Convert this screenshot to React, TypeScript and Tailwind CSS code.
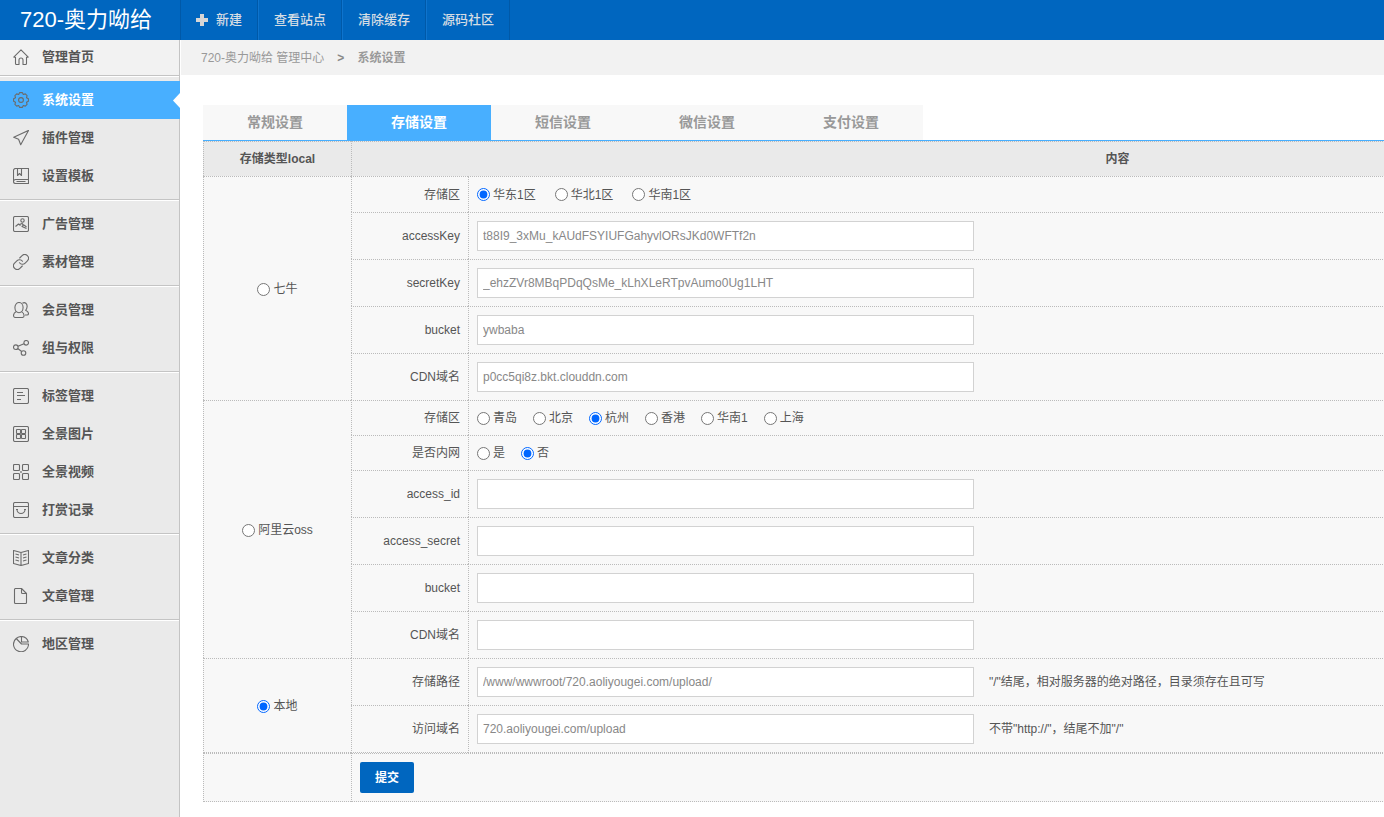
import { useState } from 'react';
import type { ReactNode } from 'react';

interface MenuEntry {
  label: string;
  icon: ReactNode;
}

interface Field {
  id: string;
  label: string;
  value?: string;
  options?: string[];
  selected?: string;
  hint?: string;
}

interface StorageGroup {
  id: string;
  label: string;
  wide?: boolean;
  fields: Field[];
}

const homeIcon = (
  <path d="M.5 8.3 8 .8l7.5 7.5M.5 8.3h2v6.200a1 1 0 0 0 1 1H6V11a2 2 0 0 1 4 0v4.500h2.500a1 1 0 0 0 1-1V8.300h2" />
);

const menuGroups: MenuEntry[][] = [
  [
    {
      label: '系统设置',
      icon: (
        <>
          <path d="M15.400 6.700v2.600l-1.900 1 .6 2-1.800 1.800-2-.6-1 1.900H6.700l-1-1.900-2 .6-1.800-1.800.6-2-1.900-1V6.700l1.900-1-.6-2 1.800-1.800 2 .6 1-1.900h2.600l1 1.900 2-.6 1.800 1.800-.6 2z" />
          <circle cx="8" cy="8" r="2.4" />
        </>
      ),
    },
    { label: '插件管理', icon: <path d="M15.5.4.7 7.300l4.900 1.900 2.100 5.600z" /> },
    {
      label: '设置模板',
      icon: (
        <>
          <path d="M15.5.5h-13a2 2 0 0 0-2 2v11a2 2 0 0 0 2 2h13zM.5 13.500a2 2 0 0 1 2-2h13M3.500 13.500h9" />
          <path d="M4.500.5v7l2-2 2 2v-7" />
        </>
      ),
    },
  ],
  [
    {
      label: '广告管理',
      icon: (
        <>
          <rect x=".5" y=".5" width="15" height="15" rx="1.5" />
          <circle cx="9.5" cy="4.5" r="1.7" />
          <path d="M2.500 10.500 5.500 8l2 1.500M6.500 8.500 9 7.500l1.500 1.500L9 10.500l4.500 2M11 9l2.500 2" />
        </>
      ),
    },
    {
      label: '素材管理',
      icon: (
        <g transform="translate(-1 -1) scale(.75)" strokeWidth="1.5" strokeLinecap="round">
          <path d="M10 13a5 5 0 0 0 7.540.54l3-3a5 5 0 0 0-7.070-7.070l-3.200 3.200" />
          <path d="M14 11a5 5 0 0 0-7.540-.54l-3 3a5 5 0 0 0 7.070 7.070l3.200-3.200" />
        </g>
      ),
    },
  ],
  [
    {
      label: '会员管理',
      icon: (
        <>
          <ellipse cx="6" cy="5.6" rx="4.1" ry="5.1" />
          <path d="M3.300 9.600C1.500 10.600.5 11.700.5 13.400c0 1.300.8 2.100 2 2.100h6.600c1.200 0 2-.8 2-2.100 0-1.700-1-2.800-2.600-3.800" />
          <path d="M9.400 1.300c2.600-1.800 5 .4 4.700 3.500-.1 1.600-.6 2.700-1.500 3.500 1.800.8 2.900 1.800 2.900 3.300 0 .9-.6 1.400-1.500 1.400h-2" />
        </>
      ),
    },
    {
      label: '组与权限',
      icon: (
        <>
          <circle cx="2.8" cy="7.2" r="2.3" />
          <circle cx="13.2" cy="2.8" r="2.3" />
          <circle cx="10.5" cy="13" r="2.3" />
          <path d="m5 6.300 6-2.500M4.700 8.500l4 3" />
        </>
      ),
    },
  ],
  [
    {
      label: '标签管理',
      icon: (
        <>
          <rect x=".5" y=".5" width="15" height="15" rx="1.5" />
          <path d="M4 4.500h6M4 7.500h8M4 11.500h4" />
        </>
      ),
    },
    {
      label: '全景图片',
      icon: (
        <>
          <rect x=".5" y=".5" width="15" height="15" rx="1.5" />
          <rect x="3.5" y="3.5" width="4" height="4" rx=".5" />
          <rect x="8.5" y="3.5" width="4" height="4" rx=".5" />
          <rect x="3.5" y="8.5" width="4" height="4" rx=".5" />
          <rect x="8.5" y="8.5" width="4" height="4" rx=".5" />
        </>
      ),
    },
    {
      label: '全景视频',
      icon: (
        <>
          <rect x=".5" y=".5" width="6" height="6" rx="1" />
          <rect x="9.5" y=".5" width="6" height="6" rx="1" />
          <rect x=".5" y="9.5" width="6" height="6" rx="1" />
          <rect x="9.5" y="9.5" width="6" height="6" rx="1" />
          <path d="m6.500 6.500 3 3M9.500 6.500l-3 3" strokeWidth=".6" />
        </>
      ),
    },
    {
      label: '打赏记录',
      icon: (
        <>
          <rect x=".5" y=".5" width="15" height="15" rx="1.5" />
          <path d="M.5 4.500h15M4 7.500a4 4 0 0 0 8 0M3 7.500h2M11 7.500h2" />
        </>
      ),
    },
  ],
  [
    {
      label: '文章分类',
      icon: (
        <>
          <path d="M8 2.500.5.500v13l7.500 2 7.500-2V.5zM8 2.500v13" />
          <path d="m2.500 4 3.500 1M2.500 7 6 8M2.500 10 6 11M13.500 4 10 5M13.500 7 10 8M13.500 10 10 11" />
        </>
      ),
    },
    {
      label: '文章管理',
      icon: <path d="M8.500.5h-6a1 1 0 0 0-1 1v13a1 1 0 0 0 1 1h10a1 1 0 0 0 1-1v-9zM8.500.5v4a1 1 0 0 0 1 1h4" />,
    },
  ],
  [
    {
      label: '地区管理',
      icon: (
        <>
          <path d="M3.200 2.500A7.500 7.500 0 1 0 15.500 8H8.500z" />
          <path d="M8.500.5V6h6.800A7.500 7.500 0 0 0 8.500.5zM3.200 2.500A7.500 7.500 0 0 1 8.500.5" />
        </>
      ),
    },
  ],
];

const navLinks = ['查看站点', '清除缓存', '源码社区'];
const tabs = ['常规设置', '存储设置', '短信设置', '微信设置', '支付设置'];

const storageGroups: StorageGroup[] = [
  {
    id: 'qiniu',
    label: '七牛',
    wide: true,
    fields: [
      { id: 'qiniu-zone', label: '存储区', options: ['华东1区', '华北1区', '华南1区'], selected: '华东1区' },
      { id: 'qiniu-access', label: 'accessKey', value: 't88I9_3xMu_kAUdFSYIUFGahyvlORsJKd0WFTf2n' },
      { id: 'qiniu-secret', label: 'secretKey', value: '_ehzZVr8MBqPDqQsMe_kLhXLeRTpvAumo0Ug1LHT' },
      { id: 'qiniu-bucket', label: 'bucket', value: 'ywbaba' },
      { id: 'qiniu-cdn', label: 'CDN域名', value: 'p0cc5qi8z.bkt.clouddn.com' },
    ],
  },
  {
    id: 'oss',
    label: '阿里云oss',
    fields: [
      { id: 'oss-zone', label: '存储区', options: ['青岛', '北京', '杭州', '香港', '华南1', '上海'], selected: '杭州' },
      { id: 'oss-internal', label: '是否内网', options: ['是', '否'], selected: '否' },
      { id: 'oss-access', label: 'access_id', value: '' },
      { id: 'oss-secret', label: 'access_secret', value: '' },
      { id: 'oss-bucket', label: 'bucket', value: '' },
      { id: 'oss-cdn', label: 'CDN域名', value: '' },
    ],
  },
  {
    id: 'local',
    label: '本地',
    fields: [
      { id: 'local-path', label: '存储路径', value: '/www/wwwroot/720.aoliyougei.com/upload/', hint: '"/"结尾，相对服务器的绝对路径，目录须存在且可写' },
      { id: 'local-domain', label: '访问域名', value: '720.aoliyougei.com/upload', hint: '不带"http://"，结尾不加"/"' },
    ],
  },
];

function MenuItem({ label, icon, active }: MenuEntry & { active?: boolean }) {
  return (
    <a
      href="#"
      className={`relative flex h-[38px] items-center gap-[13px] pl-[13px] text-[13px] font-bold ${
        active ? '-mr-px bg-[#48afff] text-white' : 'text-[#555]'
      }`}
    >
      <svg className="size-4 shrink-0" viewBox="0 0 16 16" fill="none" stroke="#6b6b6b" strokeWidth="1.1" strokeLinejoin="round">
        {icon}
      </svg>
      <span>{label}</span>
      {active && (
        <svg className="absolute top-3 right-0 h-[15px] w-[7px]" viewBox="0 0 7 15" fill="#fff">
          <path d="M7 0v15L0 7.500z" />
        </svg>
      )}
    </a>
  );
}

interface RadioProps {
  name: string;
  label: string;
  checked: boolean;
  onChange: () => void;
}

function Radio({ name, label, checked, onChange }: RadioProps) {
  return (
    <label className="inline-flex items-center gap-[3px]">
      <input type="radio" name={name} checked={checked} onChange={onChange} className="size-[13px] accent-[#0066ff]" />
      <span>{label}</span>
    </label>
  );
}

function FieldInput({ field, wide }: { field: Field; wide?: boolean }) {
  const [value, setValue] = useState(field.options ? field.selected : field.value);

  if (field.options) {
    return (
      <div role="radiogroup" aria-labelledby={`${field.id}-label`} className={`flex items-center ${wide ? 'gap-[19px]' : 'gap-4'}`}>
        {field.options.map((option) => (
          <Radio key={option} name={field.id} label={option} checked={value === option} onChange={() => setValue(option)} />
        ))}
      </div>
    );
  }

  return (
    <div className="flex items-center gap-[15px]">
      <input
        id={field.id}
        type="text"
        value={value}
        onChange={(e) => setValue(e.target.value)}
        className="h-[30px] w-[497px] border border-[#d2d2d2] bg-white px-[5px] text-xs text-[#888] focus:outline-none"
      />
      {field.hint && <span>{field.hint}</span>}
    </div>
  );
}

export default function App() {
  const [storage, setStorage] = useState('local');
  const [activeTab, setActiveTab] = useState('存储设置');

  return (
    <div className="flex min-h-screen flex-col bg-white font-['Liberation_Sans','Noto_Sans_CJK_SC',sans-serif] text-xs text-[#555]">
      <header className="flex h-10 bg-[#0066bf] text-[13px] font-medium text-[#d6dde4]">
        <div className="w-[180px] shrink-0 pl-5 text-[22px] leading-10 font-normal text-white">720-奥力呦给</div>
        <nav className="flex border-l border-[#0059a8]">
          <a href="#" className="flex items-center border-r border-[#0059a8] px-[15px]">
            <svg className="mr-2 size-3" viewBox="0 0 12 12" fill="#d6d6d6">
              <path d="M4 0h4v4h4v4H8v4H4V8H0V4h4z" />
            </svg>
            新建
          </a>
          {navLinks.map((link) => (
            <a key={link} href="#" className="flex items-center border-r border-l border-r-[#0059a8] border-l-[#0f74cd] px-[15px]">
              {link}
            </a>
          ))}
        </nav>
      </header>

      <div className="flex flex-1">
        <aside className="w-[180px] shrink-0 border-r border-[#c4c4c4] bg-[#eaeaea]">
          <div className="flex h-9 items-center border-b border-[#c4c4c4] bg-[#f2f2f2] pb-0.5">
            <MenuItem label="管理首页" icon={homeIcon} />
          </div>
          {menuGroups.map((group, index) => (
            <div
              key={index}
              className={`border-t border-white py-1 ${index < menuGroups.length - 1 ? 'border-b border-b-[#c4c4c4]' : ''}`}
            >
              {group.map((entry) => (
                <MenuItem key={entry.label} {...entry} active={entry.label === '系统设置'} />
              ))}
            </div>
          ))}
        </aside>

        <main className="min-w-0 flex-1 overflow-x-hidden">
          <div className="ml-px flex h-[35px] items-center gap-[13px] bg-[#f2f2f2] pl-5 text-[#999]">
            <span>720-奥力呦给 管理中心</span>
            <span className="font-bold text-[#888]">&gt;</span>
            <span className="font-bold">系统设置</span>
          </div>

          <div className="mt-[30px] ml-[23px] min-w-[1680px]">
            <div className="flex border-b border-[#48afff]">
              {tabs.map((tab) => (
                <button
                  key={tab}
                  type="button"
                  onClick={() => setActiveTab(tab)}
                  className={`h-[35px] w-36 pb-0.5 text-sm font-bold ${
                    activeTab === tab ? 'bg-[#48afff] text-white' : 'bg-[#f8f8f8] text-[#999]'
                  }`}
                >
                  {tab}
                </button>
              ))}
            </div>

            <table className="w-full table-fixed border-separate border-spacing-0 bg-[#f8f8f8]">
              <colgroup>
                <col className="w-[148px]" />
                <col className="w-[117px]" />
                <col />
              </colgroup>
              <thead>
                <tr className="h-[35px] bg-[#eaeaea]">
                  <th className="border-t border-l border-dotted border-[#bbb]">存储类型local</th>
                  <th colSpan={2} className="border-t border-l border-dotted border-[#bbb]">内容</th>
                </tr>
              </thead>
              <tbody>
                {storageGroups.map((group, groupIndex) => {
                  const lastGroup = groupIndex === storageGroups.length - 1;
                  return group.fields.map((field, index) => {
                    const lastRow = lastGroup && index === group.fields.length - 1;
                    const edge = `border-t border-l border-dotted border-[#bbb] ${lastRow ? 'border-b' : ''}`;
                    return (
                      <tr key={field.id} className={group.wide ? 'h-9' : 'h-[35px]'}>
                        {index === 0 && (
                          <td
                            rowSpan={group.fields.length}
                            className={`border-t border-l border-dotted border-[#bbb] pt-1 text-center ${lastGroup ? 'border-b' : ''}`}
                          >
                            <Radio
                              name="storage"
                              label={group.label}
                              checked={storage === group.id}
                              onChange={() => setStorage(group.id)}
                            />
                          </td>
                        )}
                        <td className={`${edge} pr-2 text-right`}>
                          {field.options ? (
                            <span id={`${field.id}-label`}>{field.label}</span>
                          ) : (
                            <label htmlFor={field.id}>{field.label}</label>
                          )}
                        </td>
                        <td className={`${edge} px-2 py-2`}>
                          <FieldInput field={field} wide={group.wide} />
                        </td>
                      </tr>
                    );
                  });
                })}
              </tbody>
              <tfoot>
                <tr>
                  <td className="border-y border-l border-dotted border-[#bbb]" />
                  <td colSpan={2} className="border-y border-l border-dotted border-[#bbb] p-2">
                    <button type="submit" className="block h-[31px] w-[54px] rounded-xs bg-[#0066bf] font-bold text-white">
                      提交
                    </button>
                  </td>
                </tr>
              </tfoot>
            </table>
          </div>
        </main>
      </div>
    </div>
  );
}
